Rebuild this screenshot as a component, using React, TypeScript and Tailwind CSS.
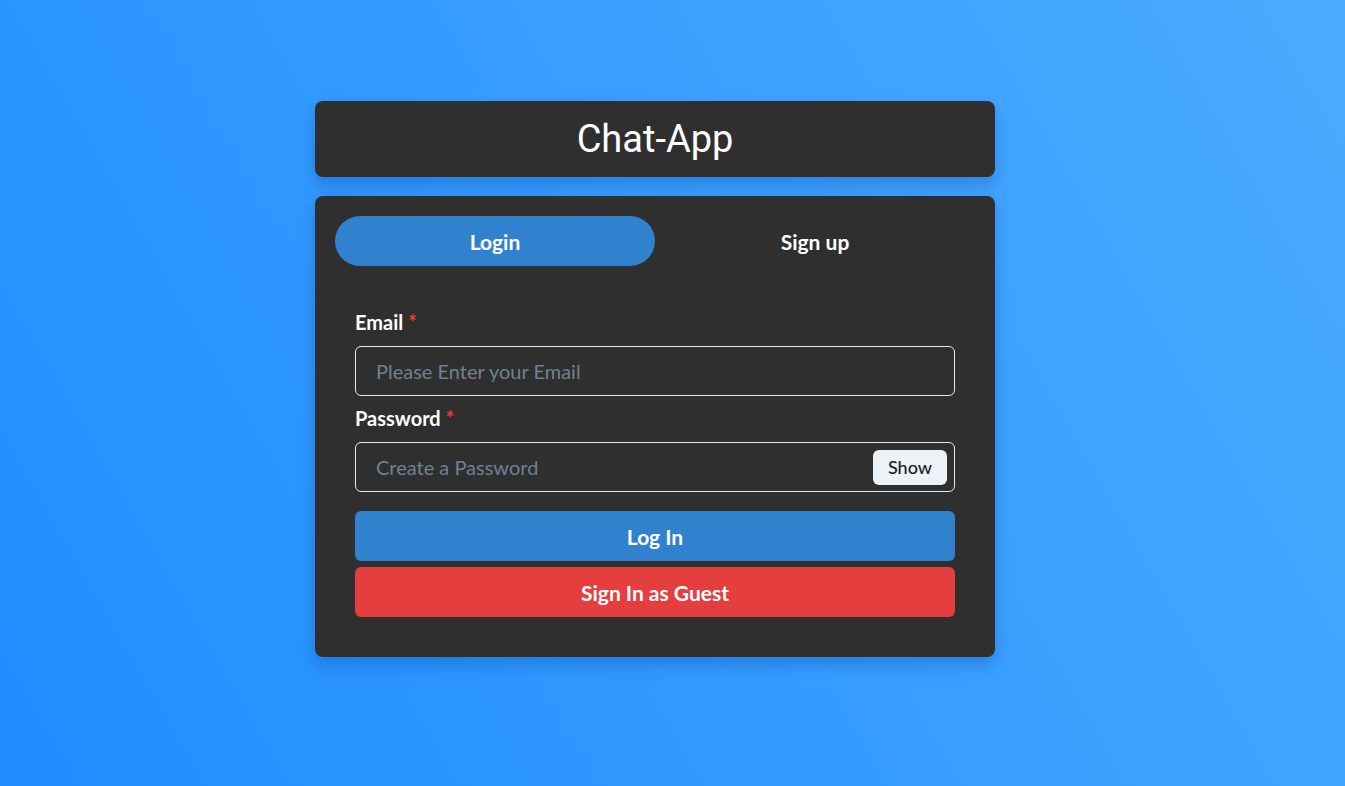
import { useState } from 'react';

function Field({
  label,
  placeholder,
  type,
  children,
}: {
  label: string;
  placeholder: string;
  type: string;
  children?: React.ReactNode;
}) {
  return (
    <div className="flex flex-col">
      <label className="mb-[8px] h-[28px] text-[20px] font-bold leading-[24px] text-white">
        {label}
        <span className="ml-[5px] text-[#e53e3e]">*</span>
      </label>
      <div className="relative">
        <input
          type={type}
          placeholder={placeholder}
          className="h-[50px] w-full rounded-md border border-[#e2e8f0] bg-transparent px-[20px] text-[20px] text-white outline-none placeholder:text-[#718096]"
        />
        {children}
      </div>
    </div>
  );
}

export default function App() {
  const [tab, setTab] = useState<'login' | 'signup'>('login');
  const [show, setShow] = useState(false);

  return (
    <div
      className="min-h-screen w-full bg-[linear-gradient(60deg,#1f8dff_0%,#3aa0ff_60%,#4aabff_100%)] pl-[315px] pt-[101px]"
      style={{ fontFamily: 'Lato, "Open Sans", sans-serif' }}
    >
      <div className="flex w-[680px] flex-col">
        {/* Header */}
        <div className="flex h-[76px] items-center justify-center rounded-lg bg-[#2f2f2f] shadow-[0_8px_16px_rgba(0,40,120,0.25)]">
          <h1
            className="text-[38px] leading-none text-white"
            style={{ fontFamily: 'Roboto, sans-serif' }}
          >
            Chat-App
          </h1>
        </div>

        {/* Card */}
        <div className="mt-[19px] rounded-lg bg-[#2f2f2f] p-[20px] shadow-[0_8px_16px_rgba(0,40,120,0.25)]">
          <div className="flex">
            <button
              onClick={() => setTab('login')}
              className={
                tab === 'login'
                  ? 'h-[50px] flex-1 rounded-full bg-[#3182ce] pt-[1px] text-[21px] font-bold text-white'
                  : 'h-[50px] flex-1 rounded-full pt-[1px] text-[21px] font-bold text-white'
              }
            >
              Login
            </button>
            <button
              onClick={() => setTab('signup')}
              className={
                tab === 'signup'
                  ? 'h-[50px] flex-1 rounded-full bg-[#3182ce] pt-[1px] text-[21px] font-bold text-white'
                  : 'h-[50px] flex-1 rounded-full pt-[1px] text-[21px] font-bold text-white'
              }
            >
              Sign up
            </button>
          </div>

          <div className="flex flex-col px-[20px] pb-[20px] pt-[44px]">
            <Field label="Email" placeholder="Please Enter your Email" type="email" />
            <div className="mt-[10px]">
              <Field
                label="Password"
                placeholder="Create a Password"
                type={show ? 'text' : 'password'}
              >
                <button
                  onClick={() => setShow(!show)}
                  className="absolute right-[8px] top-[8px] h-[35px] w-[74px] rounded-md bg-[#edf2f7] text-[18px] font-medium text-[#1a202c]"
                >
                  {show ? 'Hide' : 'Show'}
                </button>
              </Field>
            </div>
            <button className="mt-[19px] h-[50px] w-full rounded-md bg-[#3182ce] pt-[1px] text-[21px] font-bold text-white">
              Log In
            </button>
            <button className="mt-[6px] h-[50px] w-full rounded-md bg-[#e53e3e] pt-[1px] text-[21px] font-bold text-white">
              Sign In as Guest
            </button>
          </div>
        </div>
      </div>
    </div>
  );
}
